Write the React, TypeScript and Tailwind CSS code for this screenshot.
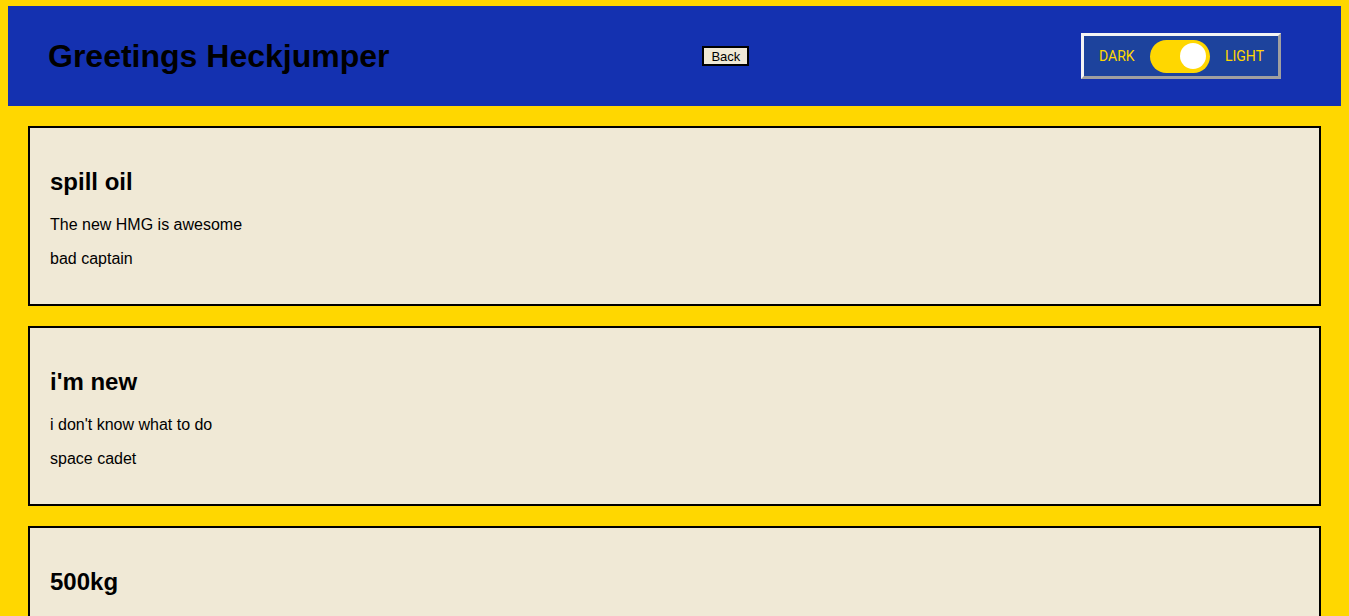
const posts = [
  { title: 'spill oil', body: 'The new HMG is awesome', author: 'bad captain' },
  { title: "i'm new", body: "i don't know what to do", author: 'space cadet' },
  { title: '500kg', body: 'need more bombs', author: 'helldiver' },
]

export default function App() {
  return (
    <div className="min-h-screen bg-[#ffd700] px-2 pt-[6px] pb-6 font-['Liberation_Sans',Arial,sans-serif] text-black">
      <header className="flex h-[100px] items-center bg-[#1431b0] pl-10 pr-[60px]">
        <h1 className="text-[32px] font-bold leading-none">Greetings Heckjumper</h1>
        <button className="ml-[313px] h-5 border-2 border-black bg-[#f0e9d6] px-[7px] text-[13px] leading-none">
          Back
        </button>
        <div className="ml-auto flex h-[46px] w-[200px] items-center justify-between border-[3px] border-t-[#f4f4f4] border-l-[#f4f4f4] border-r-[#a0a0a0] border-b-[#a0a0a0] bg-[#1d439d] pl-[15px] pr-[14px] font-['Roboto',sans-serif] text-[14px] text-[#ffd700]">
          <span>DARK</span>
          <span className="flex h-[33px] w-[60px] items-center justify-end rounded-full bg-[#ffd700] pr-[4px]">
            <span className="h-[26px] w-[26px] rounded-full bg-white" />
          </span>
          <span>LIGHT</span>
        </div>
      </header>
      <main className="mx-5 mt-5 flex flex-col gap-5">
        {posts.map((p) => (
          <div key={p.title} className="border-2 border-black bg-[#f0e9d6] px-5 py-5">
            <h2 className="my-5 text-[24px] font-bold leading-[28px]">{p.title}</h2>
            <p className="my-4 text-base leading-[18px]">{p.body}</p>
            <p className="my-4 text-base leading-[18px]">{p.author}</p>
          </div>
        ))}
      </main>
    </div>
  )
}
